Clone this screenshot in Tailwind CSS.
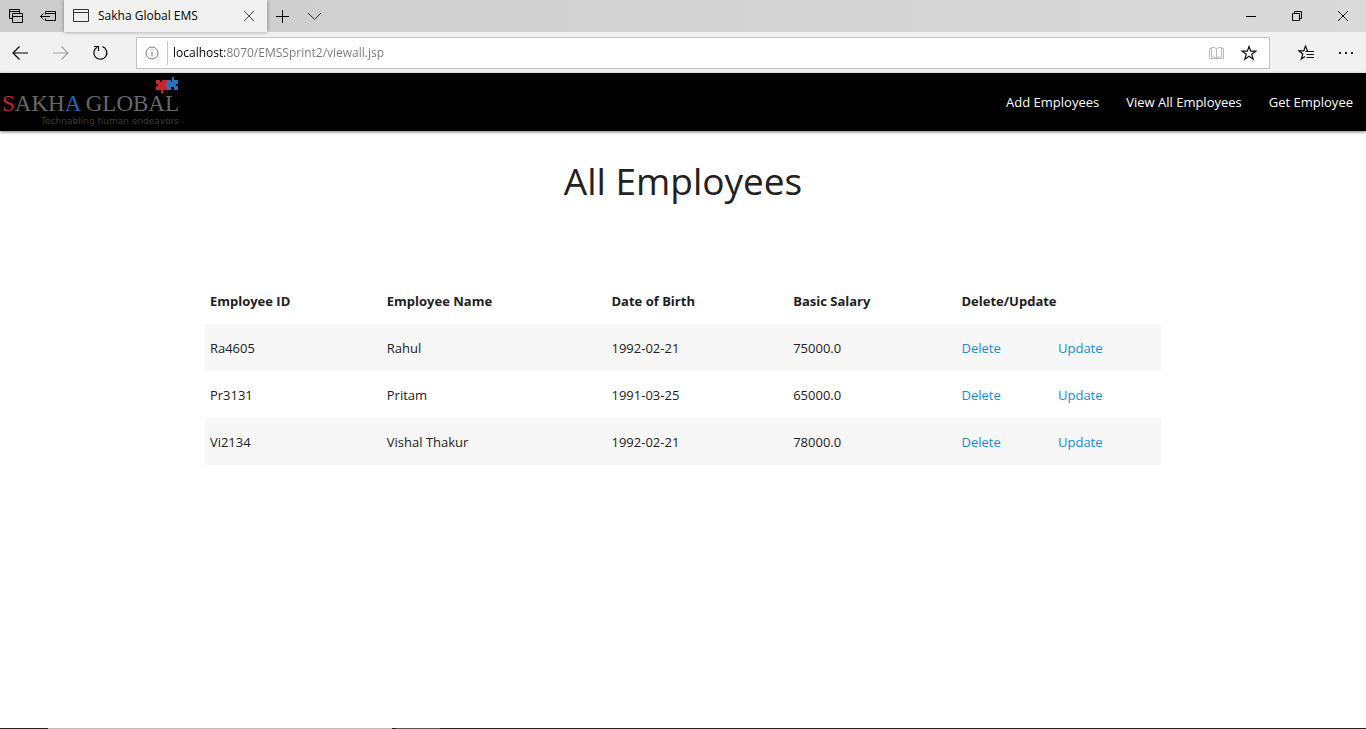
<!DOCTYPE html>
<html lang="en">
<head>
<meta charset="utf-8">
<meta name="viewport" content="width=device-width, initial-scale=1">
<title>Sakha Global EMS</title>
<script src="https://cdn.jsdelivr.net/npm/@tailwindcss/browser@4"></script>
</head>
<body class="flex min-h-screen flex-col bg-white font-['Open_Sans',sans-serif] text-[13px] text-[#212121]">

<!-- Browser chrome -->
<div class="bg-[#f1f1f1] text-black">
  <div class="flex h-8 items-stretch bg-linear-to-r from-[#cccccc] to-[#dadada]">
    <div class="flex w-16 items-center gap-4 pl-2">
      <button aria-label="Tabs set aside" class="size-4"><svg class="size-4" viewBox="0 0 16 16" fill="none" stroke="currentColor"><path d="M4 10.500H1.500v-9h10V5M1.500 3.500h10M4.500 5.500h10v9h-10zM4.500 8.500h10"/></svg></button>
      <button aria-label="Set tabs aside" class="size-4"><svg class="size-4" viewBox="0 0 16 16" fill="none" stroke="currentColor"><path d="M5.500 6.500v-3h10v9h-10v-2M5.500 5.500h10M10 8.500H.5M3.500 5.500l-3 3 3 3"/></svg></button>
    </div>
    <div class="flex w-[203px] items-center bg-[#f1f1f1] pl-2 shadow-[0_0_4px_#00000066]">
      <svg class="h-4 w-[18px]" viewBox="0 0 18 16" fill="none" stroke="#333"><path d="M1.500 1.500h15v12h-15zM1.500 4.500h15"/></svg>
      <span class="ml-2 text-xs">Sakha Global EMS</span>
      <button aria-label="Close tab" class="mr-2 ml-auto size-5"><svg class="size-5" viewBox="0 0 20 20" fill="none" stroke="#444"><path d="M5 5l10 10M15 5L5 15"/></svg></button>
    </div>
    <div class="flex items-center gap-4 pl-2">
      <button aria-label="New tab" class="size-4"><svg class="size-4" viewBox="0 0 16 16" fill="none" stroke="currentColor"><path d="M1 8.500h13M7.500 2v13"/></svg></button>
      <button aria-label="Show tab previews" class="size-4"><svg class="size-4" viewBox="0 0 16 16" fill="none" stroke="#333"><path d="M1 5l6.500 6.500L14 5"/></svg></button>
    </div>
    <div class="ml-auto flex items-center">
      <button aria-label="Minimize" class="flex w-[46px] justify-center"><svg class="size-4" viewBox="0 0 16 16" fill="none" stroke="currentColor"><path d="M3 8.500h10"/></svg></button>
      <button aria-label="Restore" class="flex w-[46px] justify-center"><svg class="size-4" viewBox="0 0 16 16" fill="none" stroke="currentColor"><path d="M3.500 5.500h7v7h-7zM5.500 5V3.500h7v7H11"/></svg></button>
      <button aria-label="Close" class="flex w-[46px] justify-center"><svg class="size-4" viewBox="0 0 16 16" fill="none" stroke="currentColor"><path d="M3 3l10 10M13 3L3 13"/></svg></button>
    </div>
  </div>

  <div class="flex h-[41px] items-center">
    <div class="flex w-[136px] items-center gap-5 pl-2">
      <button aria-label="Back" class="size-5"><svg class="ml-1 size-5" viewBox="0 0 20 20" fill="none" stroke="currentColor" stroke-width="1.200"><path d="M16 10H1M7.500 3.500L1 10l6.500 6.500"/></svg></button>
      <button aria-label="Forward" class="size-5"><svg class="ml-1 size-5" viewBox="0 0 20 20" fill="none" stroke="#a0a0a0" stroke-width="1.200"><path d="M1 10h15M9.500 3.500L16 10l-6.500 6.500"/></svg></button>
      <button aria-label="Refresh" class="size-5"><svg class="ml-1 size-5" viewBox="0 0 20 20" fill="none" stroke="currentColor" stroke-width="1.200"><path d="M10.500 3.600A6.500 6.500 0 1 1 5 4.200M2 3.500h4.500V8"/></svg></button>
    </div>
    <form class="flex h-8 flex-1 items-center border border-[#c3c3c3] bg-white">
      <button type="button" aria-label="Site information" class="flex h-6 w-[31px] items-center justify-center border-r border-[#c8c8c8]"><svg class="size-[14px]" viewBox="0 0 14 14" fill="none" stroke="#777"><circle cx="7" cy="7" r="6"/><path d="M7 6v4.500M7 3.500v1.200"/></svg></button>
      <input type="text" aria-label="Address" value="localhost:8070/EMSSprint2/viewall.jsp" class="h-6 min-w-0 flex-1 bg-[linear-gradient(to_right,#000_57px,#777_57px)] bg-clip-text pl-[5px] text-xs text-transparent outline-none">
      <button type="button" aria-label="Reading view" class="mx-3 size-4"><svg class="size-4" viewBox="0 0 16 16" fill="none" stroke="#bbb"><path d="M2.500 3.500h-2v10h14v-10h-2M7.500 3v10M2.500 12v-9.500h3.500L7.500 4 9 2.500h3.500V12H9l-1.500 1.500L6 12z"/></svg></button>
      <button type="button" aria-label="Add to favorites" class="mr-3 ml-1 size-4"><svg class="size-4" viewBox="0 0 16 16" fill="none" stroke="#111" stroke-width="1.200"><path d="M8 1.500l1.700 4.700h5l-4 3 1.500 5L8 11.300 3.800 14.200l1.500-5-4-3h5z"/></svg></button>
    </form>
    <div class="flex w-24 items-center justify-end gap-6 pr-3">
      <button aria-label="Favorites hub" class="size-4"><svg class="size-4" viewBox="0 0 16 16" fill="none" stroke="#111" stroke-width="1.200"><path d="M9.500 6L7.500 1 5.800 5.800h-5l4 3.200-1.500 5L7 11.500M7.500 6.500H16M8.500 9.500H16M8.500 12.500H16"/></svg></button>
      <button aria-label="Settings and more" class="size-4"><svg class="size-4" viewBox="0 0 16 16" fill="#222"><path d="M1 7h2v2H1zM7 7h2v2H7zM13 7h2v2h-2z"/></svg></button>
    </div>
  </div>
</div>

<!-- Site header -->
<header class="flex h-[58px] items-center justify-between bg-black pr-[13px] shadow-[0_1px_3px_#00000088]">
  <a href="#" class="relative flex flex-col items-end self-start pt-[19px] pl-[2px]">
    <span class="font-['Liberation_Serif',serif] text-[23px] leading-6 whitespace-nowrap text-[#686868]"><span class="text-[#c4222b]">S</span>AKH<span class="text-[#2469b0]">A</span> GLOBAL</span>
    <span class="font-['DejaVu_Sans',sans-serif] text-[9px] leading-[10px] whitespace-nowrap text-[#3d3d3d]">Technabling human endeavors</span>
    <svg class="absolute top-[3px] right-0 h-[17px] w-6" viewBox="0 0 24 17"><path fill="#c9232d" d="M1 4h4v2h2V4h5v3h-2v3h2v4H8v3H6v-3H1v-4h2V8H1z"/><path fill="#2a70bd" d="M12 4h4v2h1V1h2v3h4v4h-2v2h2v4h-4v-3h-3v3h-4v-4h-2V7h2z"/></svg>
  </a>
  <nav class="flex gap-[27px] pt-[2px] whitespace-nowrap text-white">
    <a href="#">Add Employees</a>
    <a href="#">View All Employees</a>
    <a href="#">Get Employee</a>
  </nav>
</header>

<main class="flex-1">
  <h1 class="mt-6 text-center text-[37px] leading-[52px]">All Employees</h1>
  <table class="mx-auto mt-[70px] w-[70%] table-fixed text-left">
    <colgroup><col class="w-[18.5%]"><col class="w-[23.5%]"><col class="w-[19%]"><col class="w-[17.6%]"><col class="w-[10.1%]"><col></colgroup>
    <thead>
      <tr class="h-[47px]"><th class="px-[5px] pt-[2px]">Employee ID</th><th class="px-[5px] pt-[2px]">Employee Name</th><th class="px-[5px] pt-[2px]">Date of Birth</th><th class="px-[5px] pt-[2px]">Basic Salary</th><th class="px-[5px] pt-[2px]" colspan="2">Delete/Update</th></tr>
    </thead>
    <tbody>
      <tr class="h-[47px] bg-[#f7f7f7]"><td class="px-[5px] pt-[2px]">Ra4605</td><td class="px-[5px] pt-[2px]">Rahul</td><td class="px-[5px] pt-[2px]">1992-02-21</td><td class="px-[5px] pt-[2px]">75000.0</td><td class="px-[5px] pt-[2px]"><a href="#" class="text-[#0f8fdb]">Delete</a></td><td class="px-[5px] pt-[2px]"><a href="#" class="text-[#0f8fdb]">Update</a></td></tr>
      <tr class="h-[47px]"><td class="px-[5px] pt-[2px]">Pr3131</td><td class="px-[5px] pt-[2px]">Pritam</td><td class="px-[5px] pt-[2px]">1991-03-25</td><td class="px-[5px] pt-[2px]">65000.0</td><td class="px-[5px] pt-[2px]"><a href="#" class="text-[#0f8fdb]">Delete</a></td><td class="px-[5px] pt-[2px]"><a href="#" class="text-[#0f8fdb]">Update</a></td></tr>
      <tr class="h-[47px] bg-[#f7f7f7]"><td class="px-[5px] pt-[2px]">Vi2134</td><td class="px-[5px] pt-[2px]">Vishal Thakur</td><td class="px-[5px] pt-[2px]">1992-02-21</td><td class="px-[5px] pt-[2px]">78000.0</td><td class="px-[5px] pt-[2px]"><a href="#" class="text-[#0f8fdb]">Delete</a></td><td class="px-[5px] pt-[2px]"><a href="#" class="text-[#0f8fdb]">Update</a></td></tr>
    </tbody>
  </table>
</main>

<!-- Top edge of the taskbar -->
<div class="flex h-px bg-[#222]"><div class="ml-12 w-[344px] bg-[#bdbdbd]"></div><div class="ml-1 w-11 bg-[#555]"></div></div>
</body>
</html>
